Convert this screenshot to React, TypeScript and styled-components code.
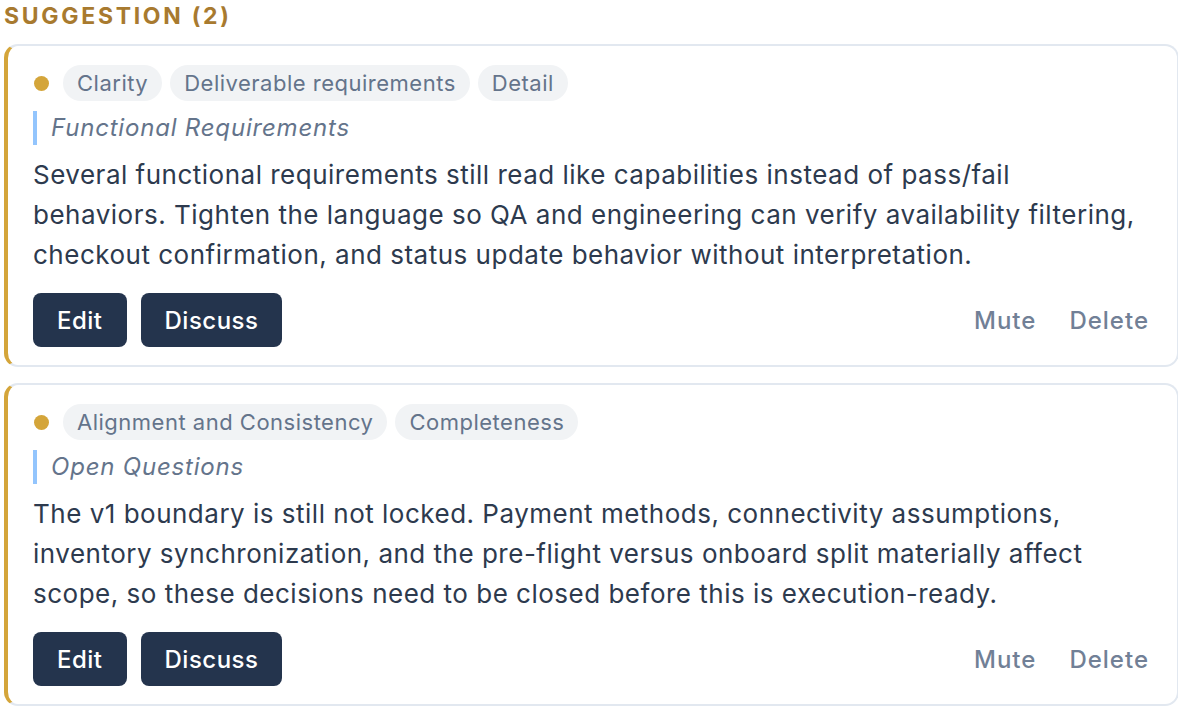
import React from 'react';
import styled, { createGlobalStyle } from 'styled-components';

const GlobalStyle = createGlobalStyle`
    html, body {
        margin: 0;
        background: #ffffff;
    }
    body {
        font-family: Inter, 'Noto Sans', sans-serif;
    }
`;

type SuggestionType = {
    tags: string[];
    section: string;
    text: string;
};

const suggestions: SuggestionType[] = [
    {
        tags: ['Clarity', 'Deliverable requirements', 'Detail'],
        section: 'Functional Requirements',
        text: 'Several functional requirements still read like capabilities instead of pass/fail behaviors. Tighten the language so QA and engineering can verify availability filtering, checkout confirmation, and status update behavior without interpretation.',
    },
    {
        tags: ['Alignment and Consistency', 'Completeness'],
        section: 'Open Questions',
        text: 'The v1 boundary is still not locked. Payment methods, connectivity assumptions, inventory synchronization, and the pre-flight versus onboard split materially affect scope, so these decisions need to be closed before this is execution-ready.',
    },
];

const SuggestionCard = (props: SuggestionType) => {
    return (
        <Card>
            <TagRow>
                <Dot />
                {props.tags.map((tag) => (
                    <Tag key={tag}>{tag}</Tag>
                ))}
            </TagRow>
            <Section>{props.section}</Section>
            <Body>{props.text}</Body>
            <Actions>
                <PrimaryButton>Edit</PrimaryButton>
                <PrimaryButton>Discuss</PrimaryButton>
                <Spacer />
                <TextButton>Mute</TextButton>
                <TextButton>Delete</TextButton>
            </Actions>
        </Card>
    );
};

export default function App() {
    return (
        <>
            <GlobalStyle />
            <Page>
                <Heading>Suggestion (2)</Heading>
                <List>
                    {suggestions.map((s) => (
                        <SuggestionCard key={s.section} {...s} />
                    ))}
                </List>
            </Page>
        </>
    );
}

const Page = styled.div`
    padding: 0 0 0 4px;
    width: 1175px;
`;

const Heading = styled.h3`
    margin: 0 0 12px;
    height: 32px;
    line-height: 32px;
    font-size: 23px;
    font-weight: 700;
    letter-spacing: 2.7px;
    text-transform: uppercase;
    color: #a87a2f;
`;

const List = styled.div`
    display: flex;
    flex-direction: column;
    gap: 16px;
`;

const Card = styled.article`
    background: #ffffff;
    border: 2px solid #e2e8f0;
    border-left: 4px solid #d4a53a;
    border-radius: 14px;
    padding: 19px 28px 18px 25px;
    display: flex;
    flex-direction: column;
`;

const TagRow = styled.div`
    display: flex;
    align-items: center;
    gap: 8px;
`;

const Dot = styled.span`
    width: 15px;
    height: 15px;
    border-radius: 50%;
    background: #d4a53a;
    margin: 0 6px 0 1px;
`;

const Tag = styled.span`
    height: 36px;
    line-height: 37px;
    padding: 0 14px;
    border-radius: 18px;
    background: #f1f3f5;
    color: #64748b;
    font-size: 22px;
    letter-spacing: 0.5px;
`;

const Section = styled.div`
    margin-top: 10px;
    border-left: 4px solid #93c5fd;
    padding-left: 14px;
    height: 34px;
    line-height: 34px;
    font-size: 24px;
    font-style: italic;
    letter-spacing: 0.8px;
    color: #64748b;
`;

const Body = styled.p`
    margin: 10px 0 0;
    font-size: 26px;
    line-height: 40px;
    color: #2d3a4e;
    letter-spacing: 0.5px;
`;

const Actions = styled.div`
    margin-top: 18px;
    display: flex;
    align-items: center;
    gap: 14px;
`;

const PrimaryButton = styled.button`
    height: 54px;
    padding: 0 24px;
    border: none;
    border-radius: 8px;
    background: #24344d;
    color: #ffffff;
    font-family: inherit;
    font-size: 24px;
    font-weight: 500;
    letter-spacing: 0.5px;
`;

const Spacer = styled.div`
    flex: 1;
`;

const TextButton = styled.button`
    border: none;
    background: none;
    padding: 0;
    margin-left: 19px;
    color: #718096;
    font-family: inherit;
    font-size: 24px;
    font-weight: 500;
    letter-spacing: 1px;
`;
